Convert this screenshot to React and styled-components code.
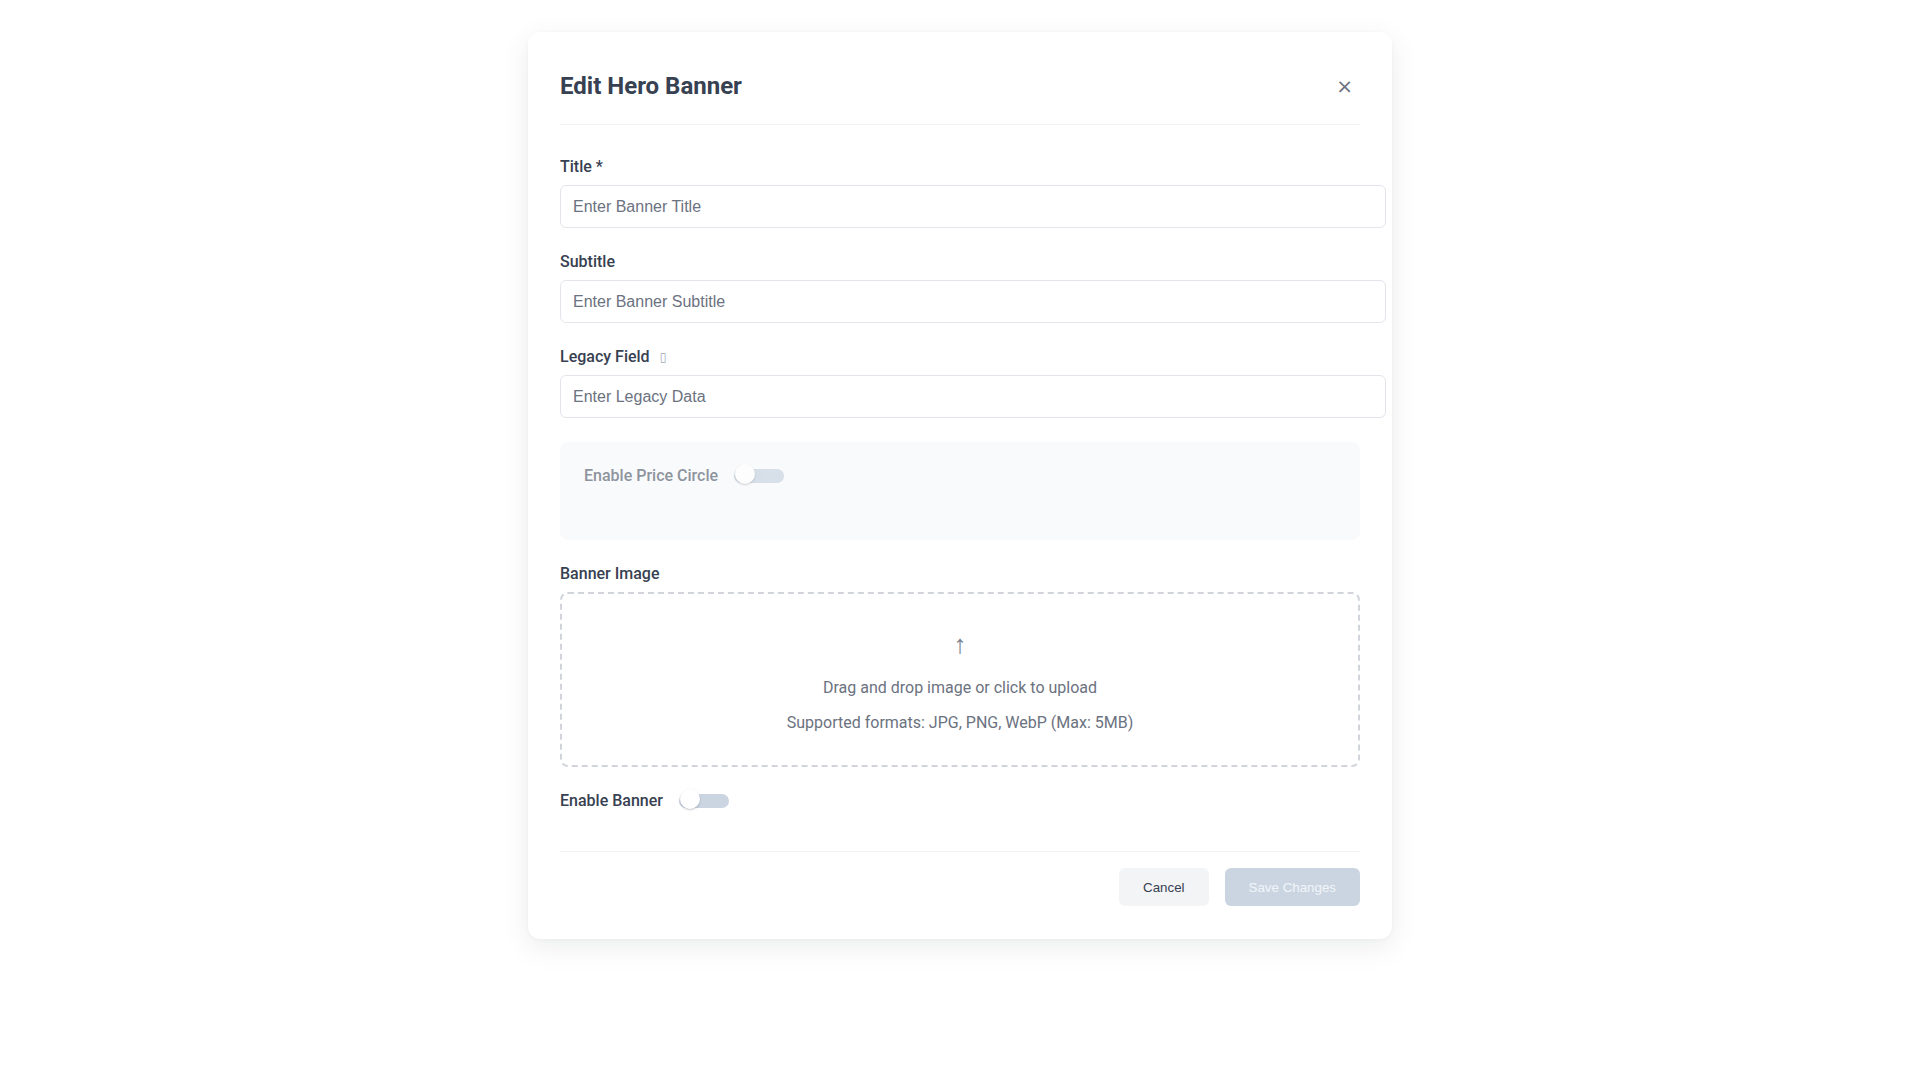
import React from 'react'
import styled, { createGlobalStyle } from 'styled-components'

const GlobalStyle = createGlobalStyle`
  html, body {
    margin: 0;
    padding: 0;
    background: #ffffff;
  }
  body {
    font-family: Roboto, "Liberation Sans", sans-serif;
  }
`

const Page = styled.div`
  display: flex;
  justify-content: center;
  padding-top: 32px;
  min-height: 1080px;
  box-sizing: border-box;
`

const Modal = styled.div`
  width: 864px;
  box-sizing: border-box;
  padding: 32px 32px 33px;
  background: #ffffff;
  border-radius: 12px;
  box-shadow: 0 8px 30px rgba(15, 23, 42, 0.08), 0 1px 4px rgba(15, 23, 42, 0.04);
  align-self: flex-start;
`

const Header = styled.div`
  display: flex;
  align-items: center;
  justify-content: space-between;
  height: 44px;
  padding-bottom: 16px;
  border-bottom: 1px solid #f1f3f5;
  margin-bottom: 32px;
`

const Heading = styled.h2`
  margin: 0;
  font-size: 24px;
  font-weight: 700;
  color: #374151;
`

const CloseButton = styled.button`
  border: none;
  background: none;
  padding: 0;
  margin-right: 7px;
  font-family: "DejaVu Sans", sans-serif;
  font-size: 20px;
  line-height: 1;
  color: #6b7280;
  cursor: pointer;
`

const Field = styled.div`
  margin-bottom: 24px;
`

const Label = styled.label`
  display: flex;
  align-items: center;
  gap: 10px;
  margin-bottom: 8px;
  font-size: 16px;
  line-height: 20px;
  font-weight: 500;
  color: #374151;
`

const Hint = styled.span`
  font-family: "DejaVu Sans", sans-serif;
  font-size: 12px;
  color: #a3aab5;
`

const Input = styled.input`
  display: block;
  width: 100%;
  padding: 12px;
  border: 1px solid #e2e5ea;
  border-radius: 6px;
  font-family: "Liberation Sans", Arial, sans-serif;
  font-size: 16px;
  line-height: 17px;
  color: #374151;
  outline: none;

  &::placeholder {
    color: #6b7280;
  }
`

const OptionBox = styled.div`
  background: #f9fafb;
  border-radius: 8px;
  padding: 24px 24px 54px;
  margin-bottom: 24px;
`

const ToggleRow = styled.div`
  display: flex;
  align-items: center;
  gap: 16px;
  opacity: ${p => (p.$muted ? 0.75 : 1)};
`

const ToggleLabel = styled.span`
  font-size: 16px;
  line-height: 20px;
  font-weight: 500;
  color: ${p => (p.$muted ? '#6b7280' : '#374151')};
`

const Track = styled.span`
  position: relative;
  display: inline-block;
  width: 50px;
  height: 14px;
  border-radius: 7px;
  background: #cbd5e1;
`

const Knob = styled.span`
  position: absolute;
  left: 1px;
  top: -5px;
  width: 20px;
  height: 20px;
  border-radius: 50%;
  background: #ffffff;
  box-shadow: 0 1px 2px rgba(15, 23, 42, 0.25);
`

const DropZone = styled.div`
  display: flex;
  flex-direction: column;
  align-items: center;
  padding: 30px 32px;
  border: 2px dashed #d1d5db;
  border-radius: 8px;
  color: #6b7280;
`

const UploadArrow = styled.div`
  font-size: 26px;
  line-height: 40px;
  margin-bottom: 12px;
  color: #7b8494;
`

const DropText = styled.p`
  margin: 0;
  font-size: 16px;
  line-height: 24px;

  & + & {
    margin-top: 11px;
  }
`

const Footer = styled.div`
  display: flex;
  justify-content: flex-end;
  gap: 16px;
  margin-top: 40px;
  padding-top: 16px;
  border-top: 1px solid #f1f3f5;
`

const Button = styled.button`
  height: 38px;
  padding: 0 24px;
  border: none;
  border-radius: 6px;
  font-family: "Liberation Sans", Arial, sans-serif;
  font-size: 13.33px;
  background: ${p => (p.$primary ? '#cbd5e1' : '#f3f4f6')};
  color: ${p => (p.$primary ? '#f1f5f9' : '#374151')};
  cursor: pointer;
`

const Toggle = () => (
  <Track>
    <Knob />
  </Track>
)

const App = () => {
  return (
    <>
      <GlobalStyle />
      <Page>
        <Modal>
          <Header>
            <Heading>Edit Hero Banner</Heading>
            <CloseButton aria-label="Close">×</CloseButton>
          </Header>

          <Field>
            <Label>Title *</Label>
            <Input placeholder="Enter Banner Title" />
          </Field>
          <Field>
            <Label>Subtitle</Label>
            <Input placeholder="Enter Banner Subtitle" />
          </Field>
          <Field>
            <Label>
              Legacy Field <Hint>▯</Hint>
            </Label>
            <Input placeholder="Enter Legacy Data" />
          </Field>

          <OptionBox>
            <ToggleRow $muted>
              <ToggleLabel $muted>Enable Price Circle</ToggleLabel>
              <Toggle />
            </ToggleRow>
          </OptionBox>

          <Field>
            <Label>Banner Image</Label>
            <DropZone>
              <UploadArrow>↑</UploadArrow>
              <DropText>Drag and drop image or click to upload</DropText>
              <DropText>Supported formats: JPG, PNG, WebP (Max: 5MB)</DropText>
            </DropZone>
          </Field>

          <ToggleRow>
            <ToggleLabel>Enable Banner</ToggleLabel>
            <Toggle />
          </ToggleRow>

          <Footer>
            <Button>Cancel</Button>
            <Button $primary>Save Changes</Button>
          </Footer>
        </Modal>
      </Page>
    </>
  )
}

export default App
